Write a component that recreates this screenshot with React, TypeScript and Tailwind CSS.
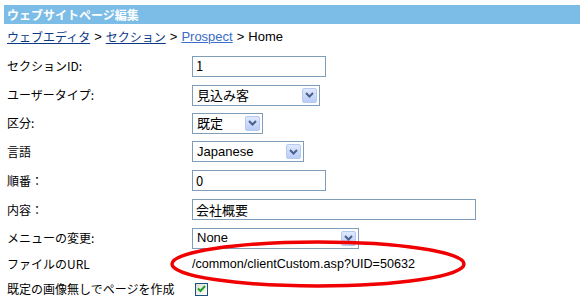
const jp = "font-['Noto_Sans_CJK_JP','Liberation_Sans',sans-serif]";
const latin = "font-['Liberation_Sans','Noto_Sans_CJK_JP',sans-serif]";

const Arrow = () => (
    <div className="ml-auto mr-[1px] flex h-[15px] w-[15px] items-center justify-center rounded-[2px] border border-[#b7c9f0] bg-gradient-to-b from-[#dfe8fd] to-[#b9cdf8]">
        <svg width="9" height="6" viewBox="0 0 9 6">
            <path d="M1 1l3.5 3.5L8 1" fill="none" stroke="#4a5f8a" strokeWidth={2} />
        </svg>
    </div>
);

const FakeSelect = ({ value, width, font }: { value: string; width: string; font: string }) => (
    <div className={`flex h-[21px] items-center border border-[#7f9db9] bg-white pl-[4px] pr-[1px] text-[13px] text-black ${width} ${font}`}>
        <span>{value}</span>
        <Arrow />
    </div>
);

const TextBox = ({ value, width }: { value: string; width: string }) => (
    <div className={`flex h-[21px] items-center border border-[#7f9db9] bg-white pl-[3px] text-[13px] text-black ${width} ${jp}`}>
        {value}
    </div>
);

const Row = ({ label, height, children }: { label: string; height: string; children: React.ReactNode }) => (
    <div className={`flex items-center ${height}`}>
        <div className={`w-[185px] text-[12px] text-black ${jp}`}>{label}</div>
        {children}
    </div>
);

export default function App() {
    return (
        <div className="relative h-[302px] w-[580px] overflow-hidden bg-white pt-[5px]">
            {/* Header */}
            <div className={`ml-[4px] flex h-[19px] items-center bg-[#7bbde6] pl-[3px] text-[12px] font-bold text-white ${jp}`}>
                ウェブサイトページ編集
            </div>

            {/* Breadcrumb */}
            <div className={`flex h-[25px] items-center pl-[7px] text-[13px] text-black ${latin}`}>
                <a className={`text-[12px] text-[#0c3a86] underline ${jp}`}>ウェブエディタ</a>
                <span className="px-[4px]">&gt;</span>
                <a className={`text-[12px] text-[#0c3a86] underline ${jp}`}>セクション</a>
                <span className="px-[4px]">&gt;</span>
                <a className="text-[#3a6cc8] underline">Prospect</a>
                <span className="px-[4px]">&gt;</span>
                <span>Home</span>
            </div>

            {/* Form */}
            <div className="mt-[2px] pl-[7px]">
                <Row label="セクションID:" height="h-[30px]">
                    <TextBox value="1" width="w-[134px]" />
                </Row>
                <Row label="ユーザータイプ:" height="h-[28px]">
                    <FakeSelect value="見込み客" width="w-[128px]" font={jp} />
                </Row>
                <Row label="区分:" height="h-[28px]">
                    <FakeSelect value="既定" width="w-[71px]" font={jp} />
                </Row>
                <Row label="言語" height="h-[29px]">
                    <FakeSelect value="Japanese" width="w-[112px]" font={latin} />
                </Row>
                <Row label="順番：" height="h-[29px]">
                    <TextBox value="0" width="w-[134px]" />
                </Row>
                <Row label="内容：" height="h-[29px]">
                    <TextBox value="会社概要" width="w-[284px]" />
                </Row>
                <Row label="メニューの変更:" height="h-[28px]">
                    <FakeSelect value="None" width="w-[167px]" font={latin} />
                </Row>
                <Row label="ファイルのURL" height="h-[24px]">
                    <span className={`text-[12.6px] text-black ${latin}`}>/common/clientCustom.asp?UID=50632</span>
                </Row>
                <Row label="既定の画像無しでページを作成" height="h-[26px]">
                    <div className="ml-[3px] flex h-[13px] w-[13px] items-center justify-center border border-[#1c5180] bg-gradient-to-br from-[#dcdcd7] to-white">
                        <svg width="9" height="8" viewBox="0 0 9 8">
                            <path d="M1 3.5l2.5 2.5L8 1" fill="none" stroke="#21a121" strokeWidth={2} />
                        </svg>
                    </div>
                </Row>
            </div>

            {/* Red annotation ellipse */}
            <svg className="pointer-events-none absolute left-0 top-0" width="580" height="302">
                <ellipse cx="318" cy="264" rx="146" ry="22" fill="none" stroke="#f00000" strokeWidth={3.5} />
            </svg>
        </div>
    );
}
